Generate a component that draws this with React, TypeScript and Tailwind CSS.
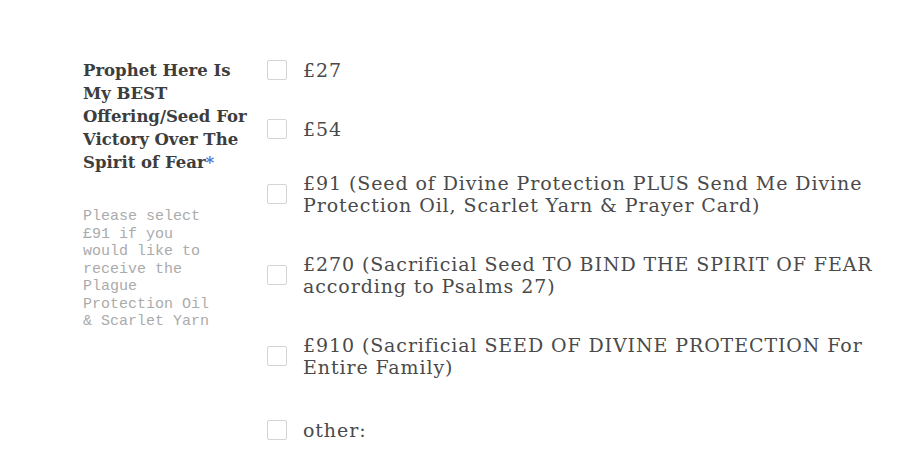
import React from "react";

const serif = "font-['DejaVu_Serif','Liberation_Serif',serif]";

type Option = { id: string; lines: string[]; shift?: string };

const options: Option[] = [
  { id: "o27", lines: ["£27"] },
  { id: "o54", lines: ["£54"] },
  {
    id: "o91",
    shift: "-mt-[5px]",
    lines: [
      "£91 (Seed of Divine Protection PLUS Send Me Divine",
      "Protection Oil, Scarlet Yarn & Prayer Card)",
    ],
  },
  {
    id: "o270",
    lines: [
      "£270 (Sacrificial Seed TO BIND THE SPIRIT OF FEAR",
      "according to Psalms 27)",
    ],
  },
  {
    id: "o910",
    lines: [
      "£910 (Sacrificial SEED OF DIVINE PROTECTION For",
      "Entire Family)",
    ],
  },
  { id: "other", shift: "mt-[4px]", lines: ["other:"] },
];

function CheckRow({ option }: { option: Option }) {
  return (
    <label className={`flex items-center gap-4 cursor-pointer ${option.shift ?? ""}`}>
      <span className="w-5 h-5 shrink-0 rounded-[2px] border border-[#d4d4d4] bg-white" />
      <span className={`${serif} text-[19px] tracking-[0.9px] leading-[22px] text-[#4a4a4a]`}>
        {option.lines.map((l) => (
          <span key={l} className="block whitespace-nowrap">
            {l}
          </span>
        ))}
      </span>
    </label>
  );
}

export default function App() {
  return (
    <div className="w-[904px] h-[465px] bg-white overflow-hidden">
      <div className="flex pl-[83px] pt-[59px]">
        {/* question label */}
        <div className="w-[184px] shrink-0">
          <div className={`${serif} font-bold text-[16.5px] leading-[23px] text-[#3d3d3d]`}>
            <span className="block">Prophet Here Is</span>
            <span className="block">My BEST</span>
            <span className="block">Offering/Seed For</span>
            <span className="block">Victory Over The</span>
            <span className="block">
              Spirit of Fear<span className="text-[#4a78d4]">*</span>
            </span>
          </div>
          <div className="mt-[34px] font-['Liberation_Mono',monospace] text-[15px] leading-[17.5px] text-[#ababab]">
            <span className="block">Please select</span>
            <span className="block">£91 if you</span>
            <span className="block">would like to</span>
            <span className="block">receive the</span>
            <span className="block">Plague</span>
            <span className="block">Protection Oil</span>
            <span className="block">&amp; Scarlet Yarn</span>
          </div>
        </div>

        {/* checkbox choices */}
        <div className="flex flex-col gap-[37px]">
          {options.map((o) => (
            <CheckRow key={o.id} option={o} />
          ))}
        </div>
      </div>
    </div>
  );
}
